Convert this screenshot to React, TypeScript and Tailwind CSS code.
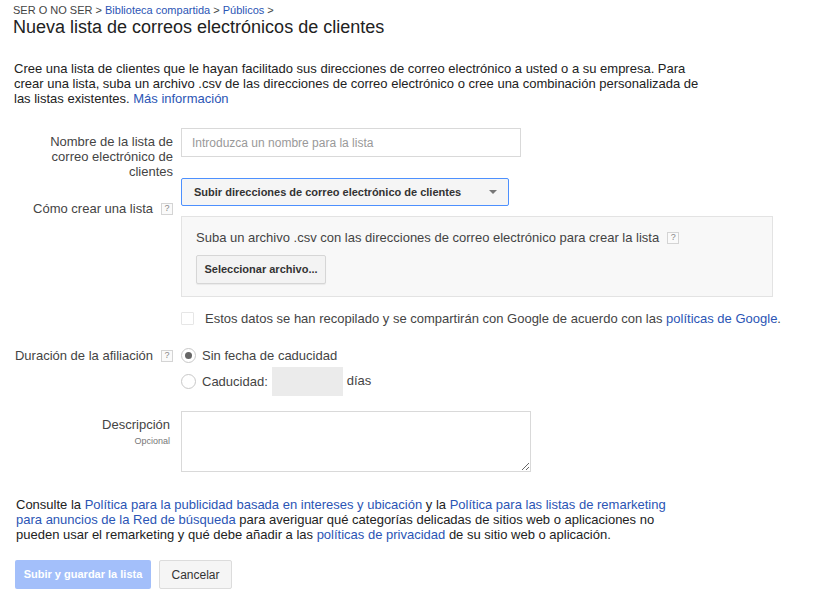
const LINK = 'text-[#2b55b5]';

function Help() {
  return (
    <span className="inline-flex h-[12px] w-[12px] items-center justify-center border border-[#d4d4d4] bg-[#fafafa] text-[9px] leading-none text-[#888]">
      ?
    </span>
  );
}

function Radio({ checked }: { checked?: boolean }) {
  return (
    <span className="flex h-[15px] w-[15px] items-center justify-center rounded-full border border-[#c8c8c8] bg-white">
      {checked && <span className="h-[7px] w-[7px] rounded-full bg-[#666]" />}
    </span>
  );
}

export default function App() {
  return (
    <div className="min-h-[605px] w-[814px] bg-white font-['Liberation_Sans',Arial,sans-serif] text-[13px] text-[#222]">
      <div className="px-[13px] pt-[3px]">
        <div className="text-[11px] leading-[14px] text-[#444]">
          SER O NO SER &gt; <span className={LINK}>Biblioteca compartida</span> &gt;{' '}
          <span className={LINK}>Públicos</span> &gt;
        </div>
        <h1 className="text-[18px] leading-[20px] text-[#222]">Nueva lista de correos electrónicos de clientes</h1>
      </div>

      <p className="mt-[24px] whitespace-nowrap px-[14px] leading-[15px]">
        Cree una lista de clientes que le hayan facilitado sus direcciones de correo electrónico a usted o a su empresa. Para
        <br />
        crear una lista, suba un archivo .csv de las direcciones de correo electrónico o cree una combinación personalizada de
        <br />
        las listas existentes. <span className={LINK}>Más información</span>
      </p>

      <div className="mt-[22px] grid grid-cols-[173px_1fr] gap-x-[8px]">
        {/* nombre */}
        <div className="pt-[6px] text-right leading-[15px] text-[#444]">
          Nombre de la lista de
          <br />
          correo electrónico de
          <br />
          clientes
        </div>
        <div>
          <div className="flex h-[29px] w-[340px] items-center border border-[#d9d9d9] px-[10px] text-[12px] text-[#999]">
            Introduzca un nombre para la lista
          </div>
        </div>

        {/* como crear */}
        <div className="flex items-center justify-end gap-[8px] self-start pt-[22px] leading-[15px] text-[#444]">
          Cómo crear una lista <Help />
        </div>
        <div className="-mt-[1px]">
          <div className="flex h-[28px] w-[328px] items-center justify-between rounded-[2px] border border-[#4d90fe] bg-[#f5f5f5] pl-[12px] pr-[11px] text-[11px] font-bold text-[#333]">
            Subir direcciones de correo electrónico de clientes
            <span className="h-0 w-0 border-x-[4px] border-t-[4px] border-x-transparent border-t-[#777]" />
          </div>
          <div className="mt-[10px] h-[81px] w-[592px] border border-[#e3e3e3] bg-[#f8f8f8] px-[14px] pt-[13px]">
            <div className="flex items-center gap-[8px] leading-[15px] text-[#444]">
              Suba un archivo .csv con las direcciones de correo electrónico para crear la lista <Help />
            </div>
            <div className="mt-[10px] flex h-[29px] w-[130px] items-center justify-center rounded-[2px] border border-[#d6d6d6] bg-[#f3f3f3] text-[11px] font-bold text-[#333] shadow-[0_1px_1px_rgba(0,0,0,0.06)]">
              Seleccionar archivo...
            </div>
          </div>
          <div className="mt-[14px] flex items-center gap-[11px] leading-[15px] text-[#444]">
            <span className="h-[13px] w-[13px] rounded-[1px] border border-[#e6e6e6] bg-white" />
            <span>
              Estos datos se han recopilado y se compartirán con Google de acuerdo con las{' '}
              <span className={LINK}>políticas de Google</span>.
            </span>
          </div>
        </div>

        {/* duracion */}
        <div className="flex items-center justify-end gap-[8px] self-start pt-[22px] leading-[15px] text-[#444]">
          <span className="-ml-[2px] whitespace-nowrap">Duración de la afiliación</span> <Help />
        </div>
        <div className="pt-[22px]">
          <div className="flex items-center gap-[6px] leading-[15px] text-[#444]">
            <Radio checked /> Sin fecha de caducidad
          </div>
          <div className="mt-[4px] flex items-center text-[#444]">
            <Radio />
            <span className="ml-[6px]">Caducidad:</span>
            <span className="ml-[4px] h-[29px] w-[71px] bg-[#ebebeb]" />
            <span className="-mt-[2px] ml-[4px]">días</span>
          </div>
        </div>

        {/* descripcion */}
        <div className="self-start pr-[3px] pt-[21px] text-right text-[#444]">
          <div className="leading-[15px]">Descripción</div>
          <div className="mt-[3px] text-[9px] leading-[12px] text-[#777]">Opcional</div>
        </div>
        <div className="pt-[15px]">
          <textarea className="block h-[61px] w-[350px] border border-[#d9d9d9] outline-none" />
        </div>
      </div>

      <p className="mt-[25px] whitespace-nowrap px-[16px] leading-[15px] text-[#222]">
        Consulte la <span className={LINK}>Política para la publicidad basada en intereses y ubicación</span> y la{' '}
        <span className={LINK}>Política para las listas de remarketing</span>
        <br />
        <span className={LINK}>para anuncios de la Red de búsqueda</span> para averiguar qué categorías delicadas de sitios
        web o aplicaciones no
        <br />
        pueden usar el remarketing y qué debe añadir a las <span className={LINK}>políticas de privacidad</span> de su sitio
        web o aplicación.
      </p>

      <div className="mt-[18px] flex gap-[8px] px-[15px]">
        <button className="h-[29px] w-[136px] rounded-[2px] bg-[#a3bffa] text-[11px] font-bold text-white">
          Subir y guardar la lista
        </button>
        <button className="h-[29px] w-[73px] rounded-[2px] border border-[#dcdcdc] bg-[#f5f5f5] text-[12px] text-[#333]">
          Cancelar
        </button>
      </div>
    </div>
  );
}
